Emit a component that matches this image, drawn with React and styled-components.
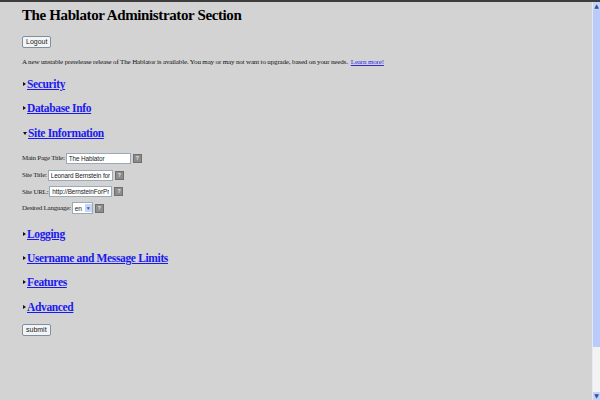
import styled, { createGlobalStyle } from "styled-components";

const Global = createGlobalStyle`
  html, body { margin: 0; padding: 0; background: #d3d3d3; }
  body { font-family: "Liberation Serif", "Times New Roman", serif; }
`;

const Page = styled.div`
  display: flex;
  height: 400px;
  border-top: 2px solid #3c3c3c;
  box-sizing: border-box;
  background: #d3d3d3;
  overflow: hidden;
`;

const Content = styled.div`
  flex: 1;
  padding-left: 22px;
`;

const Scrollbar = styled.div`
  width: 7px;
  display: flex;
  flex-direction: column;
  background: #c3d3fa;
  border-left: 1px solid #e3e9f8;
`;

const ScrollArrow = styled.div`
  height: 8px;
  font-size: 6px;
  line-height: 8px;
  text-align: center;
  color: #33508f;
  font-family: "DejaVu Sans", sans-serif;
`;

const ScrollTrack = styled.div`
  flex: 1;
  display: flex;
  flex-direction: column;
`;

const ScrollThumb = styled.div`
  flex: 1;
  background: #b9cbf8;
`;

const ScrollRest = styled.div`
  height: 45px;
  background: #f3f3f3;
`;

const Title = styled.h1`
  margin: 3px 0 0;
  font-size: 15px;
  letter-spacing: -0.38px;
  line-height: 21px;
  font-weight: bold;
  color: #000;
`;

const Button = styled.button`
  display: block;
  height: 12px;
  padding: 0 3px;
  font-family: "Liberation Sans", Arial, sans-serif;
  font-size: 7px;
  line-height: 10px;
  color: #222;
  background: #f4f4f4;
  border: 1px solid #7d8fa3;
  border-radius: 2px;
  margin-top: ${(p) => p.$top}px;
`;

const Notice = styled.p`
  margin: 8px 0 0;
  font-size: 7px;
  letter-spacing: -0.15px;
  line-height: 12px;
  color: #111;
`;

const NoticeLink = styled.a`
  color: #2a2ae8;
  text-decoration: underline;
  margin-left: 3px;
`;

const Section = styled.div`
  display: flex;
  align-items: center;
  height: 24px;
  margin-top: ${(p) => p.$top || 0}px;
`;

const Triangle = styled.span`
  width: 0;
  height: 0;
  margin: 0 1px 0 1px;
  ${(p) =>
    p.$open
      ? `border-left: 2.5px solid transparent; border-right: 2.5px solid transparent; border-top: 3px solid #111;`
      : `border-top: 2.5px solid transparent; border-bottom: 2.5px solid transparent; border-left: 3px solid #111;`}
`;

const SectionLink = styled.a`
  font-size: 11.5px;
  letter-spacing: -0.35px;
  font-weight: bold;
  color: #1a1af0;
  text-decoration: underline;
  text-decoration-thickness: 1px;
`;

const Form = styled.div`
  margin-top: 5px;
`;

const Row = styled.div`
  display: flex;
  align-items: center;
  height: 16.7px;
  font-size: 7px;
  letter-spacing: -0.25px;
  color: #222;
`;

const Label = styled.span`
  margin-right: 1px;
`;

const Input = styled.input`
  width: ${(p) => p.$w}px;
  height: 11px;
  box-sizing: border-box;
  padding: 0 2px;
  font-family: "Liberation Sans", Arial, sans-serif;
  font-size: 6.4px;
  letter-spacing: -0.1px;
  color: #222;
  background: #fff;
  border: 1px solid #9ab;
  outline: none;
`;

const Select = styled.div`
  display: flex;
  align-items: center;
  height: 10px;
  background: #fff;
  border: 1px solid #9ab;
  font-family: "Liberation Sans", Arial, sans-serif;
  font-size: 6.6px;
  padding-left: 2px;
`;

const SelectArrow = styled.span`
  width: 7px;
  height: 8px;
  margin-left: 3px;
  background: #c7d5f6;
  color: #3b5aa0;
  font-size: 5px;
  line-height: 8px;
  text-align: center;
`;

const Help = styled.span`
  width: 7px;
  height: 7px;
  margin-left: 2px;
  background: #8c8c8c;
  border: 1px solid #6f6f6f;
  color: #eee;
  font-family: "Liberation Sans", Arial, sans-serif;
  font-size: 5px;
  font-weight: bold;
  line-height: 7px;
  text-align: center;
`;

function Heading({ label, open, top }) {
  return (
    <Section $top={top}>
      <Triangle $open={open} />
      <SectionLink href="#">{label}</SectionLink>
    </Section>
  );
}

export default function App() {
  return (
    <Page>
      <Global />
      <Content>
        <Title>The Hablator Administrator Section</Title>
        <Button $top={10}>Logout</Button>
        <Notice>
          A new unstable prerelease release of The Hablator is available. You may or may not want to
          upgrade, based on your needs.
          <NoticeLink href="#">Learn more!</NoticeLink>
        </Notice>
        <Heading label="Security" top={4} />
        <Heading label="Database Info" />
        <Heading label="Site Information" open top={1} />
        <Form>
          <Row>
            <Label>Main Page Title:</Label>
            <Input $w={65} defaultValue="The Hablator" />
            <Help>?</Help>
          </Row>
          <Row>
            <Label>Site Title:</Label>
            <Input $w={65} defaultValue="Leonard Bernstein for President" />
            <Help>?</Help>
          </Row>
          <Row>
            <Label>Site URL:</Label>
            <Input $w={63} defaultValue="http://BernsteinForPresident.com" />
            <Help>?</Help>
          </Row>
          <Row>
            <Label>Desired Language:</Label>
            <Select>
              en
              <SelectArrow>▼</SelectArrow>
            </Select>
            <Help>?</Help>
          </Row>
        </Form>
        <Heading label="Logging" top={5} />
        <Heading label="Username and Message Limits" />
        <Heading label="Features" />
        <Heading label="Advanced" top={1} />
        <Button $top={5}>submit</Button>
      </Content>
      <Scrollbar>
        <ScrollArrow>▲</ScrollArrow>
        <ScrollTrack>
          <ScrollThumb />
          <ScrollRest />
        </ScrollTrack>
        <ScrollArrow>▼</ScrollArrow>
      </Scrollbar>
    </Page>
  );
}
